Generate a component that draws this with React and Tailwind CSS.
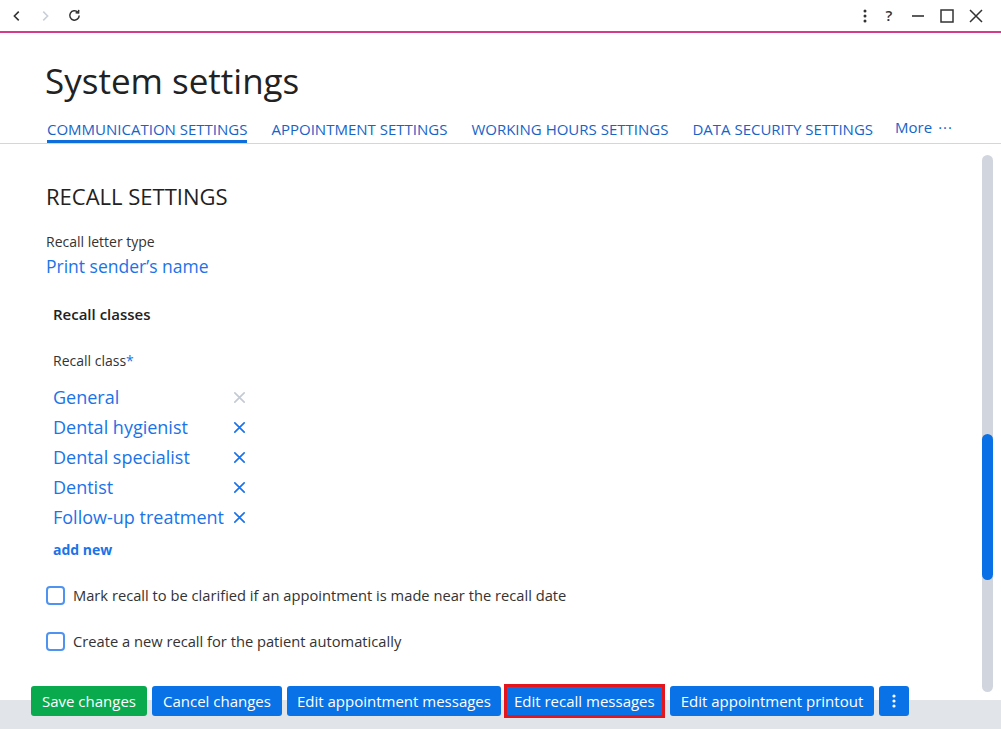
import React from "react";

const font = { fontFamily: '"Open Sans", "Noto Sans", sans-serif' };

function XIcon({ className }) {
  return (
    <svg viewBox="0 0 16 16" className={className} fill="none" stroke="currentColor" strokeWidth="1.8" strokeLinecap="round">
      <path d="M3 3 L13 13 M13 3 L3 13" />
    </svg>
  );
}

function Checkbox() {
  return <span className="inline-block w-[19px] h-[19px] rounded-[4px] border-2 border-[#4f93f0] bg-white shrink-0" />;
}

export default function App() {
  const classes = ["General", "Dental hygienist", "Dental specialist", "Dentist", "Follow-up treatment"];
  return (
    <div className="w-[1001px] h-[729px] bg-white flex flex-col overflow-hidden text-[#222]" style={font}>
      {/* top bar */}
      <div className="h-[33px] shrink-0 border-b-2 border-[#d63a8c] flex items-center justify-between px-[10px]">
        <div className="flex items-center gap-[14px] text-[#333]">
          <svg viewBox="0 0 16 16" className="w-[14px] h-[14px]" fill="none" stroke="currentColor" strokeWidth="1.8"><path d="M10 3 L5 8 L10 13" /></svg>
          <svg viewBox="0 0 16 16" className="w-[14px] h-[14px] text-[#c9cfd8]" fill="none" stroke="currentColor" strokeWidth="1.8"><path d="M6 3 L11 8 L6 13" /></svg>
          <svg viewBox="0 0 16 16" className="w-[15px] h-[15px] ml-[1px]" fill="none" stroke="currentColor" strokeWidth="1.6"><path d="M13 8 A5 5 0 1 1 11.5 4.4" /><path d="M12.5 2 L12.3 5.2 L9.2 5" /></svg>
        </div>
        <div className="flex items-center gap-[15px] text-[#333] pr-[8px]">
          <svg viewBox="0 0 4 14" className="w-[4px] h-[14px]" fill="currentColor"><circle cx="2" cy="2" r="1.5" /><circle cx="2" cy="7" r="1.5" /><circle cx="2" cy="12" r="1.5" /></svg>
          <span className="text-[15px] font-semibold leading-none w-[14px] text-center">?</span>
          <svg viewBox="0 0 14 14" className="w-[14px] h-[14px]" fill="none" stroke="currentColor" strokeWidth="1.6"><path d="M1 7 H13" /></svg>
          <svg viewBox="0 0 14 14" className="w-[14px] h-[14px]" fill="none" stroke="currentColor" strokeWidth="1.5"><rect x="1" y="1" width="12" height="12" /></svg>
          <svg viewBox="0 0 14 14" className="w-[14px] h-[14px]" fill="none" stroke="currentColor" strokeWidth="1.5"><path d="M1 1 L13 13 M13 1 L1 13" /></svg>
        </div>
      </div>

      {/* header */}
      <div className="shrink-0 pl-[45px] pt-[24px]">
        <h1 className="text-[35px] leading-[48px] text-[#222] font-normal">System settings</h1>
      </div>
      <div className="shrink-0 border-b border-[#d0d7e0] pl-[47px] flex items-end gap-[24px] mt-[12px] text-[15px] text-[#1764c7]">
        <div className="border-b-[3px] border-[#0d6edc] pb-[1px] leading-[20px]">COMMUNICATION SETTINGS</div>
        <div className="pb-[4px] leading-[20px]">APPOINTMENT SETTINGS</div>
        <div className="pb-[4px] leading-[20px]">WORKING HOURS SETTINGS</div>
        <div className="pb-[4px] leading-[20px]">DATA SECURITY SETTINGS</div>
        <div className="pb-[6px] leading-[20px] flex items-center gap-[6px] -ml-[2px]">More <span className="tracking-[1px]">···</span></div>
      </div>

      {/* content */}
      <div className="flex-1 flex min-h-0">
        <div className="flex-1 pl-[46px] pt-[38px]">
          <h2 className="text-[22px] leading-[28px] text-[#222]">RECALL SETTINGS</h2>
          <div className="mt-[23px] text-[14px] leading-[18px] text-[#333]">Recall letter type</div>
          <div className="mt-[3px] text-[17.5px] leading-[24px] text-[#1a73e8]">Print sender’s name</div>
          <div className="pl-[7px]">
            <div className="mt-[24px] text-[15px] leading-[24px] font-semibold text-[#222]">Recall classes</div>
            <div className="mt-[26px] text-[14px] leading-[18px] text-[#333]">Recall class<span className="text-[#1a73e8]">*</span></div>
            <div className="mt-[12px] flex flex-col">
              {classes.map((c, i) => (
                <div key={c} className="flex items-center h-[30px]">
                  <span className="w-[179px] text-[18px] text-[#1a73e8] whitespace-nowrap">{c}</span>
                  <XIcon className={"w-[15px] h-[15px] " + (i === 0 ? "text-[#c4cad3]" : "text-[#1a73e8]")} />
                </div>
              ))}
            </div>
            <div className="mt-[8px] text-[14px] font-bold text-[#1a73e8] leading-[20px]">add new</div>
          </div>
          <div className="mt-[24px] flex items-center gap-[8px] text-[14.7px] text-[#333]">
            <Checkbox />
            <span>Mark recall to be clarified if an appointment is made near the recall date</span>
          </div>
          <div className="mt-[24px] flex items-center gap-[8px] text-[14.7px] text-[#333]">
            <Checkbox />
            <span>Create a new recall for the patient automatically</span>
          </div>
        </div>
        <div className="w-[19px] shrink-0 pt-[11px] pr-[8px] flex">
          <div className="w-[11px] h-[537px] rounded-full bg-[#d1d6de] relative">
            <div className="absolute left-0 top-[279px] w-[11px] h-[146px] rounded-full bg-[#0a70e6]" />
          </div>
        </div>
      </div>

      {/* bottom bar */}
      <div className="h-[43px] shrink-0 bg-[linear-gradient(to_bottom,#ffffff_14px,#e1e5ea_14px)] pl-[31px] flex items-start gap-[5px] text-[15px] text-white">
        <button className="h-[30px] px-[11px] rounded-[3px] bg-[#09a94e]">Save changes</button>
        <button className="h-[30px] px-[11px] rounded-[3px] bg-[#0872e6]">Cancel changes</button>
        <button className="h-[30px] px-[10px] rounded-[3px] bg-[#0872e6]">Edit appointment messages</button>
        <button className="h-[30px] px-[8px] bg-[#0872e6] outline outline-[3px] outline-[#e3161e] -outline-offset-[1px]">Edit recall messages</button>
        <button className="h-[30px] px-[11px] rounded-[3px] bg-[#0872e6] ml-[2px]">Edit appointment printout</button>
        <button className="h-[30px] w-[30px] rounded-[3px] bg-[#0872e6] flex items-center justify-center">
          <svg viewBox="0 0 4 14" className="w-[4px] h-[14px]" fill="currentColor"><circle cx="2" cy="2" r="1.6" /><circle cx="2" cy="7" r="1.6" /><circle cx="2" cy="12" r="1.6" /></svg>
        </button>
      </div>
    </div>
  );
}
